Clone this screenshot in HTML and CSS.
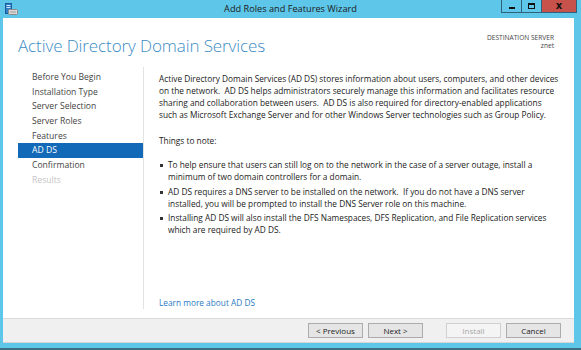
FILE: index.html
```html
<!DOCTYPE html>
<html lang="en">
<head>
    <meta charset="UTF-8">
    <title>Add Roles and Features Wizard</title>
    <link rel="stylesheet" href="styles.css">
</head>
<body>
    <div class="window">
        <!-- Title bar -->
        <div class="titlebar">
            <svg class="app-icon" width="13" height="12" viewBox="0 0 13 12">
                <rect x="0.5" y="0.5" width="6" height="10" fill="#2f7fc8" stroke="#1c5c9c"/>
                <rect x="1.5" y="2" width="4" height="1" fill="#cfe6fb"/>
                <rect x="1.5" y="4" width="4" height="1" fill="#cfe6fb"/>
                <rect x="3.5" y="6.5" width="9" height="5" rx="1" fill="#d9d9d9" stroke="#8a8a8a"/>
                <rect x="5" y="8.5" width="6" height="1" fill="#9a9a9a"/>
            </svg>
            <div class="title">Add Roles and Features Wizard</div>
            <div class="win-buttons">
                <div class="win-btn"><span class="glyph-min"></span></div>
                <div class="win-btn"><span class="glyph-max"></span></div>
                <div class="win-btn close">x</div>
            </div>
        </div>

        <div class="client">
            <div class="page">
                <div class="page-header">
                    <h1>Active Directory Domain Services</h1>
                    <div class="dest">
                        <div>DESTINATION SERVER</div>
                        <div>znet</div>
                    </div>
                </div>

                <div class="page-body">
                    <ul class="steps">
                        <li>Before You Begin</li>
                        <li>Installation Type</li>
                        <li>Server Selection</li>
                        <li>Server Roles</li>
                        <li>Features</li>
                        <li class="active">AD DS</li>
                        <li>Confirmation</li>
                        <li class="disabled">Results</li>
                    </ul>

                    <div class="content">
                        <p>Active Directory Domain Services (AD DS) stores information about users, computers, and other devices<br>
                        on the network.&nbsp; AD DS helps administrators securely manage this information and facilitates resource<br>
                        sharing and collaboration between users.&nbsp; AD DS is also required for directory-enabled applications<br>
                        such as Microsoft Exchange Server and for other Windows Server technologies such as Group Policy.</p>
                        <p class="note">Things to note:</p>
                        <ul class="bullets">
                            <li>To help ensure that users can still log on to the network in the case of a server outage, install a<br>
                            minimum of two domain controllers for a domain.</li>
                            <li>AD DS requires a DNS server to be installed on the network.&nbsp; If you do not have a DNS server<br>
                            installed, you will be prompted to install the DNS Server role on this machine.</li>
                            <li>Installing AD DS will also install the DFS Namespaces, DFS Replication, and File Replication services<br>
                            which are required by AD DS.</li>
                        </ul>
                        <a class="learn" href="#">Learn more about AD DS</a>
                    </div>
                </div>
            </div>

            <div class="footer">
                <button>&lt; Previous</button>
                <button>Next &gt;</button>
                <button class="gap" disabled>Install</button>
                <button>Cancel</button>
            </div>
        </div>
    </div>
</body>
</html>
```

FILE: styles.css
```css
* {
    box-sizing: border-box;
    margin: 0;
    padding: 0;
}

body {
    width: 581px;
    height: 350px;
    overflow: hidden;
    font-family: 'Open Sans', 'Liberation Sans', sans-serif;
    color: #333;
}

.window {
    width: 581px;
    height: 350px;
    background-color: #5ec6e9;
    display: flex;
    flex-direction: column;
    border-bottom: 2px solid #3d6f82;
}

/* Title bar */
.titlebar {
    height: 18px;
    display: flex;
    align-items: flex-start;
    position: relative;
}

.app-icon {
    margin: 3px 0 0 5px;
}

.title {
    position: absolute;
    left: 0;
    right: 0;
    top: 2px;
    text-align: center;
    font-size: 9.2px;
    line-height: 14px;
    color: #1a1a1a;
}

.win-buttons {
    margin-left: auto;
    margin-right: 4px;
    display: flex;
    height: 13px;
    border: 1px solid #2f6178;
    border-top: none;
    position: relative;
    z-index: 1;
}

.win-btn {
    width: 20px;
    height: 12px;
    border-right: 1px solid #2f6178;
    display: flex;
    align-items: center;
    justify-content: center;
}

.win-btn.close {
    width: 34px;
    border-right: none;
    background-color: #c7514b;
    color: #111;
    font: bold 10px 'DejaVu Sans', sans-serif;
    line-height: 12px;
}

.glyph-min {
    width: 6px;
    height: 2px;
    margin-top: 4px;
    background-color: #111;
}

.glyph-max {
    width: 7px;
    height: 6px;
    border: 1px solid #111;
    border-top-width: 2px;
}

/* Client area */
.client {
    flex: 1;
    margin: 0 7px 0 3px;
    display: flex;
    flex-direction: column;
}

.page {
    height: 300px;
    background-color: #fff;
    display: flex;
    flex-direction: column;
}

.page-header {
    display: flex;
    justify-content: space-between;
    padding: 13px 20px 0 15px;
    height: 49px;
}

.page-header h1 {
    font-weight: 300;
    font-size: 17px;
    color: #3b8bc4;
    margin-top: 3px;
    letter-spacing: -0.1px;
}

.dest {
    text-align: right;
    font-size: 6.6px;
    line-height: 8px;
    color: #444;
    margin-top: 3px;
}

.page-body {
    flex: 1;
    display: flex;
    padding-bottom: 9px;
}

.steps {
    list-style: none;
    width: 126px;
    margin-left: 15px;
    padding-top: 3px;
    border-right: 1px solid #e3e3e3;
    font-size: 8.6px;
}

.steps li {
    height: 14.7px;
    line-height: 14.7px;
    padding-left: 14px;
    color: #444;
}

.steps li.active {
    background-color: #1169b7;
    color: #fff;
}

.steps li.disabled {
    color: #c4c4c4;
}

.content {
    flex: 1;
    padding: 6px 10px 0 15px;
    font-size: 8.3px;
    line-height: 12px;
    color: #222;
    display: flex;
    flex-direction: column;
    white-space: nowrap;
}

.note {
    margin-top: 14px;
}

.bullets {
    list-style: none;
    margin-top: 12px;
}

.bullets li {
    position: relative;
    padding-left: 9px;
    margin-bottom: 2.5px;
}

.bullets li::before {
    content: '';
    position: absolute;
    left: 1px;
    top: 5px;
    width: 3px;
    height: 3px;
    background-color: #333;
}

.learn {
    margin-top: auto;
    color: #2a7bc4;
    text-decoration: none;
}

/* Footer buttons */
.footer {
    height: 25px;
    background-color: #f0f0f0;
    border-top: 1px solid #dadada;
    border-bottom: 1px solid #d6d6d6;
    display: flex;
    align-items: center;
    justify-content: flex-end;
    gap: 5px;
    padding-right: 13px;
}

.footer button {
    width: 55px;
    height: 15px;
    font-family: inherit;
    font-size: 8px;
    color: #222;
    background-color: #e5e5e5;
    border: 1px solid #acacac;
}

.footer button.gap {
    margin-left: 18px;
}

.footer button:disabled {
    background-color: #f4f4f4;
    border-color: #d0d0d0;
    color: #a8a8a8;
}
```
